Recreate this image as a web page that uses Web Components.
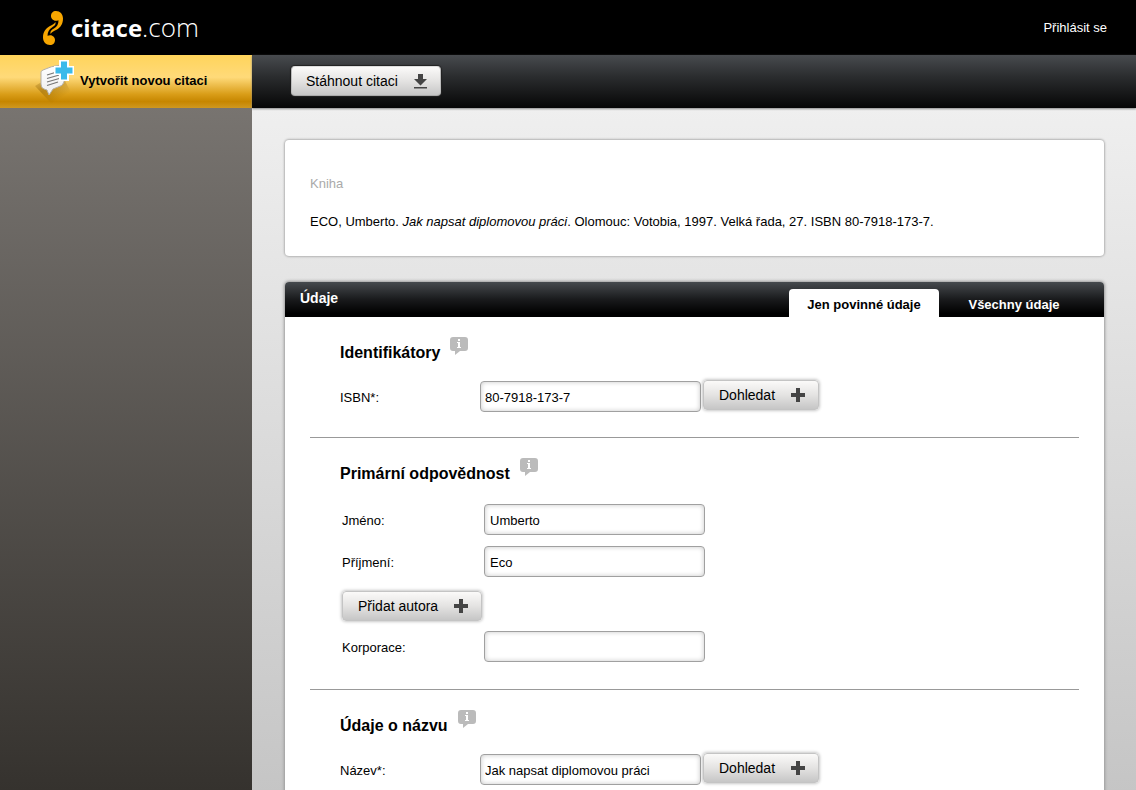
<!DOCTYPE html>
<html lang="cs">
<head>
<meta charset="utf-8">
<title>Citace.com</title>
<style>
  html, body { margin: 0; height: 100%; }
  body { font: 13px/16px "Liberation Sans", Arial, sans-serif; color: #000; background: #ccc; }
</style>
</head>
<body>
<citation-app></citation-app>

<script>
const define = (name, html, setup) => customElements.define(name, class extends HTMLElement {
  constructor() {
    super();
    const template = document.createElement('template');
    template.innerHTML = html;
    this.attachShadow({ mode: 'open' }).append(template.content.cloneNode(true));
  }
  connectedCallback() { if (setup) setup(this, this.shadowRoot); }
});

define('site-logo', `
  <style>
    :host { display: block; }
    a { display: flex; align-items: center; gap: 7px; color: #fff; text-decoration: none;
        font: 24px/32px "Open Sans", "Noto Sans", sans-serif; }
    svg { display: block; }
    b { font-weight: 700; }
    span span { font-weight: 300; font-size: 26px; }
  </style>
  <a href="#" aria-label="citace.com">
    <svg width="22" height="36" viewBox="0 0 22 36" fill="#f7a600">
      <path id="swirl" d="M14 1C18 1 21 4 21 8.500C21 14 18.500 17.500 14.500 19.800C11.500 21.200 9.500 22 8.700 24C7.800 21.500 9.500 20 12 18.600C15 16.800 16.500 14 16.500 10.200C12 12 9 9 9 6C9 3 11 1 14 1Z"/>
      <use href="#swirl" transform="rotate(180 11 18)"/>
    </svg>
    <span><b>citace</b><span>.com</span></span>
  </a>`);

define('site-header', `
  <style>
    :host { display: flex; align-items: center; justify-content: space-between; height: 55px;
            padding: 0 29px 0 42px; background: #000; }
    a { color: #fff; text-decoration: none; }
  </style>
  <site-logo></site-logo>
  <a href="#">Přihlásit se</a>`);

define('new-citation', `
  <style>
    :host { display: block; }
    a { display: flex; align-items: center; gap: 3px; height: 53px; padding-left: 33px;
        color: #000; font-weight: 700; text-decoration: none;
        background: linear-gradient(#ffd45b 0, #ffda79 42%, #d99d18 74%, #c68600 88%, #cf9820 100%); }
    svg { display: block; }
    span { padding-bottom: 2px; }
  </style>
  <a href="#">
    <svg width="44" height="53" viewBox="0 0 44 53" aria-hidden="true">
      <defs>
        <linearGradient id="shade" x1="0" y1="0" x2="1" y2="1">
          <stop offset="0" stop-color="#7b5200" stop-opacity=".1"/><stop offset=".35" stop-color="#7b5200" stop-opacity=".4"/><stop offset=".7" stop-color="#7b5200" stop-opacity="0"/>
        </linearGradient>
        <linearGradient id="paper" x1="0" y1="0" x2="0" y2="1">
          <stop offset="0" stop-color="#fff"/><stop offset="1" stop-color="#eee"/>
        </linearGradient>
      </defs>
      <path d="M7 28L2 31L19 49H44L30 22Z" fill="url(#shade)"/>
      <path d="M10 15Q18 11 28 10Q32 10 32 14L31 27Q30 31 25 32L20 34L16 40L14 35L11 34Q8 33 8 29V19Q7 16 10 15Z" fill="url(#paper)" stroke="#b5b0a5" stroke-width="1"/>
      <path d="M14 20L27 16M14 23.500L28 19.500M14 27L28 23M14 30.500L25 27" stroke="#777" stroke-width="1.300"/>
      <path d="M26 5H36V11H41V20H36V26H26V20H21V11H26Z" fill="#fff"/>
      <path d="M28 6.500H34V12.500H39.500V18.500H34V24.500H28V18.500H22.500V12.500H28Z" fill="#3bbaea"/>
    </svg>
    <span>Vytvořit novou citaci</span>
  </a>`);

define('app-button', `
  <style>
    :host { display: inline-block; flex: none; }
    button { display: flex; align-items: center; gap: 14px; height: 30px; margin: 0; padding: 0 11px 0 15px;
             border: 1px solid #c4c4c4; border-radius: 4px; color: #000; font: 14px/16px "Liberation Sans", Arial, sans-serif;
             background: linear-gradient(#fbfaf9, #e4e3e2 50%, #c6c6c6); box-shadow: 0 0 3px 1px rgba(0,0,0,.22); }
    :host([dark]) button { gap: 13px; padding-left: 14px; border-color: #ddd #bbb #aaa; box-shadow: 0 0 1px 1px #222; }
    svg { display: block; }
  </style>
  <button type="button"><slot></slot><svg width="18" height="18" viewBox="0 0 18 18" fill="#444" aria-hidden="true"><path></path></svg></button>`,
  (host, root) => root.querySelector('path').setAttribute('d', host.getAttribute('icon') === 'download'
    ? 'M7 2H12V7H16L9.500 13.500L3 7H7ZM3 15H16V16.500H3Z'
    : 'M7 2H11V7H16V11H11V16H7V11H2V7H7Z'));

define('citation-card', `
  <style>
    :host { display: flex; flex-direction: column; gap: 22px; padding: 36px 25px 26px;
            border-radius: 4px; background: #fff; box-shadow: 0 0 2px 1px #b4b4b4; }
    h2, p { margin: 0; font: inherit; }
    h2 { color: #aaa; }
  </style>
  <h2><slot name="kind"></slot></h2>
  <p><slot></slot></p>`);

define('info-hint', `
  <style>:host { display: block; } svg { display: block; }</style>
  <svg width="18" height="18" viewBox="0 0 18 18" role="img" aria-label="Nápověda">
    <path d="M3 0H15Q18 0 18 3V11Q18 14 15 14H10L5 18V14H3Q0 14 0 11V3Q0 0 3 0Z" fill="#bbb"/>
    <path d="M8 2H10V4H8ZM7 5H10V10H11V11H7V10H8V6H7Z" fill="#fff"/>
  </svg>`);

define('form-section', `
  <style>
    :host { display: block; margin: 0 25px; padding: 20px 30px 25px; border-bottom: 1px solid #999; }
    :host([last]) { border-bottom: 0; }
    header { display: flex; gap: 10px; height: 43px; }
    h3 { margin: 6px 0 0; font: 700 16px/20px "Liberation Sans", Arial, sans-serif; }
    .rows { display: flex; flex-direction: column; align-items: flex-start; gap: 10px; }
    :host([people]) .rows { padding: 2px 2px; }
    :host([people]) ::slotted(app-button) { margin: 4px 0 -1px; }
  </style>
  <header><h3><slot name="title"></slot></h3><info-hint></info-hint></header>
  <div class="rows"><slot></slot></div>`);

define('form-field', `
  <style>
    :host { display: flex; align-items: flex-start; gap: 2px; }
    label { width: 138px; margin-top: 10px; }
    :host([wide]) label { width: 140px; }
    input { box-sizing: border-box; width: 221px; height: 31px; margin: 1px 0 0; padding: 1px 4px 0; border: 1px solid #a0a0a0;
            border-radius: 4px; color: #000; font: inherit; background: #fff; box-shadow: inset 0 0 5px rgba(0,0,0,.22); }
    :host([wide]) input { padding-left: 5px; }
  </style>
  <label for="box"></label><input id="box" type="text"><slot></slot>`,
  (host, root) => {
    root.querySelector('label').textContent = host.getAttribute('label');
    root.querySelector('input').value = host.getAttribute('value') || '';
  });

define('data-panel', `
  <style>
    :host { display: flex; flex-direction: column; flex: 1; border-radius: 4px 4px 0 0; background: #fff; box-shadow: 0 0 3px 1px #999; }
    header { display: flex; justify-content: space-between; height: 35px; border-radius: 4px 4px 0 0;
             background: linear-gradient(#464a4e, #191a1c 50%, #000 90%); }
    h2 { margin: 0; padding: 8px 15px; color: #fff; font: 700 14px/16px "Liberation Sans", Arial, sans-serif; }
    nav { display: flex; align-items: flex-end; margin-right: 15px; }
    button { width: 150px; height: 28px; margin: 0; padding: 3px 0 0; border: 0; border-radius: 4px 4px 0 0;
             color: #fff; background: none; font: 700 13px/16px "Liberation Sans", Arial, sans-serif; }
    button[aria-selected=true] { color: #000; background: #fff; }
  </style>
  <header>
    <h2>Údaje</h2>
    <nav role="tablist">
      <button type="button" role="tab" aria-selected="true">Jen povinné údaje</button>
      <button type="button" role="tab" aria-selected="false">Všechny údaje</button>
    </nav>
  </header>
  <slot></slot>`);

define('citation-app', `
  <style>
    :host { display: flex; flex-direction: column; height: 100vh; overflow: hidden; }
    .body { flex: 1; display: grid; grid-template-columns: 252px 1fr; min-height: 0; }
    aside { background: linear-gradient(#7d7975, #35322e); }
    aside, main { min-height: 0; display: flex; flex-direction: column; }
    .tools { position: relative; display: flex; align-items: flex-start; flex: none; height: 53px; padding: 11px 39px 0; box-sizing: border-box;
             background: linear-gradient(#484b4f, #2b2d2f 40%, #060606); box-shadow: 0 1px 2px #888; }
    .content { display: flex; flex-direction: column; gap: 26px; flex: 1; padding: 32px 32px 0 33px;
               background: linear-gradient(#efefef, #c4c4c4); }
  </style>
  <site-header></site-header>
  <div class="body">
    <aside><new-citation></new-citation></aside>
    <main>
      <div class="tools"><app-button dark icon="download">Stáhnout citaci</app-button></div>
      <div class="content">
        <citation-card><span slot="kind">Kniha</span>ECO, Umberto. <i>Jak napsat diplomovou práci</i>. Olomouc: Votobia, 1997. Velká řada, 27. ISBN 80-7918-173-7.</citation-card>
        <data-panel>
          <form-section>
            <span slot="title">Identifikátory</span>
            <form-field label="ISBN*:" value="80-7918-173-7"><app-button icon="plus">Dohledat</app-button></form-field>
          </form-section>
          <form-section people>
            <span slot="title">Primární odpovědnost</span>
            <form-field wide label="Jméno:" value="Umberto"></form-field>
            <form-field wide label="Příjmení:" value="Eco"></form-field>
            <app-button icon="plus">Přidat autora</app-button>
            <form-field wide label="Korporace:"></form-field>
          </form-section>
          <form-section last>
            <span slot="title">Údaje o názvu</span>
            <form-field label="Název*:" value="Jak napsat diplomovou práci"><app-button icon="plus">Dohledat</app-button></form-field>
          </form-section>
        </data-panel>
      </div>
    </main>
  </div>`);
</script>
</body>
</html>
